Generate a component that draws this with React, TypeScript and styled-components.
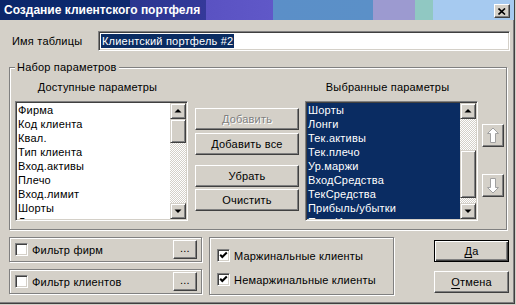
import React from 'react';
import styled, { createGlobalStyle } from 'styled-components';

const GRAY = '#d4d0c8';
const NAVY = '#0a2c62';

const AVAILABLE = [
  'Фирма',
  'Код клиента',
  'Квал.',
  'Тип клиента',
  'Вход.активы',
  'Плечо',
  'Вход.лимит',
  'Шорты',
  'Лонги',
];

const SELECTED = [
  'Шорты',
  'Лонги',
  'Тек.активы',
  'Тек.плечо',
  'Ур.маржи',
  'ВходСредства',
  'ТекСредства',
  'Прибыль/убытки',
  'ПредИммен',
];

const GlobalStyle = createGlobalStyle`
  body {
    margin: 0;
    background: ${GRAY};
    font-family: "Liberation Sans", Arial, sans-serif;
    font-size: 11px;
    letter-spacing: 0.2px;
    color: #000;
  }
`;

type ListBoxProps = {
  items: string[];
  selected?: boolean;
  thumbTop: number;
  thumbHeight: number;
};

function ScrollArrow({ down }: { down?: boolean }) {
  return (
    <svg width="14" height="14" viewBox="0 0 14 14">
      <polygon points={down ? '3.5,5.5 10.5,5.5 7,9' : '3.5,8.5 10.5,8.5 7,5'} fill="#000" />
    </svg>
  );
}

function ListBox({ items, selected, thumbTop, thumbHeight }: ListBoxProps) {
  return (
    <S_ListBox>
      <S_ListItems $selected={selected}>
        {items.map(item => (
          <S_ListItem key={item}>{item}</S_ListItem>
        ))}
      </S_ListItems>
      <S_ScrollBar>
        <S_ScrollBtn>
          <ScrollArrow />
        </S_ScrollBtn>
        <S_ScrollTrack>
          <S_Thumb $top={thumbTop} $height={thumbHeight} />
        </S_ScrollTrack>
        <S_ScrollBtn>
          <ScrollArrow down />
        </S_ScrollBtn>
      </S_ScrollBar>
    </S_ListBox>
  );
}

function MoveArrow({ down }: { down?: boolean }) {
  const pts = down
    ? '11,19 16.5,13.5 13.5,13.5 13.5,4.5 8.5,4.5 8.5,13.5 5.5,13.5'
    : '11,4 16.5,9.5 13.5,9.5 13.5,18.5 8.5,18.5 8.5,9.5 5.5,9.5';
  return (
    <svg width="20" height="21" viewBox="1 1 20 21">
      <polygon points={pts} fill="#fff" stroke="#a0a0a0" strokeWidth="1" />
    </svg>
  );
}

function CheckBox({ checked }: { checked?: boolean }) {
  return (
    <S_Check>
      {checked && (
        <svg width="9" height="9" viewBox="0 0 9 9">
          <polyline
            points="1.2,3.8 3.3,6 7.8,1.5"
            fill="none"
            stroke="#000"
            strokeWidth="2"
          />
        </svg>
      )}
    </S_Check>
  );
}

export default function App() {
  return (
    <>
      <GlobalStyle />
      <S_Window>
        <S_TitleBar>
          <S_Title>Создание клиентского портфеля</S_Title>
          <S_CloseBtn>
            <svg width="8" height="7" viewBox="0 0 8 7">
              <path d="M0.5 0.5 L7 6.5 M7 0.5 L0.5 6.5" stroke="#000" strokeWidth="1.6" />
            </svg>
          </S_CloseBtn>
        </S_TitleBar>

        <S_Body>
          <S_NameRow>
            <S_NameLabel>Имя таблицы</S_NameLabel>
            <S_Input>
              <S_Selection>Клиентский портфель #2</S_Selection>
            </S_Input>
          </S_NameRow>

          <S_Group>
            <S_Legend>Набор параметров</S_Legend>
            <S_Columns>
              <S_ListColumn>
                <S_ColumnHeader>Доступные параметры</S_ColumnHeader>
                <ListBox items={AVAILABLE} thumbTop={0} thumbHeight={24} />
              </S_ListColumn>

              <S_ButtonColumn>
                <S_Button disabled>Добавить</S_Button>
                <S_Button $gap={3}>Добавить все</S_Button>
                <S_Button $gap={10}>Убрать</S_Button>
                <S_Button $gap={2}>Очистить</S_Button>
              </S_ButtonColumn>

              <S_ListColumn>
                <S_ColumnHeader>Выбранные параметры</S_ColumnHeader>
                <ListBox items={SELECTED} selected thumbTop={31} thumbHeight={48} />
              </S_ListColumn>

              <S_ArrowColumn>
                <S_ArrowBtn>
                  <MoveArrow />
                </S_ArrowBtn>
                <S_ArrowBtn>
                  <MoveArrow down />
                </S_ArrowBtn>
              </S_ArrowColumn>
            </S_Columns>
          </S_Group>

          <S_BottomRow>
            <S_FilterColumn>
              <S_FilterBox>
                <CheckBox />
                <S_CheckLabel>Фильтр фирм</S_CheckLabel>
                <S_DotsBtn>...</S_DotsBtn>
              </S_FilterBox>
              <S_FilterBox>
                <CheckBox />
                <S_CheckLabel>Фильтр клиентов</S_CheckLabel>
                <S_DotsBtn>...</S_DotsBtn>
              </S_FilterBox>
            </S_FilterColumn>

            <S_CheckGroup>
              <S_CheckRow>
                <CheckBox checked />
                <S_CheckLabel>Маржинальные клиенты</S_CheckLabel>
              </S_CheckRow>
              <S_CheckRow>
                <CheckBox checked />
                <S_CheckLabel>Немаржинальные клиенты</S_CheckLabel>
              </S_CheckRow>
            </S_CheckGroup>

            <S_DialogButtons>
              <S_DialogBtn $default>
                <u>Д</u>а
              </S_DialogBtn>
              <S_DialogBtn>
                <u>О</u>тмена
              </S_DialogBtn>
            </S_DialogButtons>
          </S_BottomRow>
        </S_Body>
      </S_Window>
    </>
  );
}

const S_Window = styled.div`
  width: 515px;
  height: 304px;
  box-sizing: border-box;
  background: ${GRAY};
  border-right: 1px solid #404040;
  border-bottom: 1px solid #404040;
  box-shadow: inset -1px -1px 0 #808080;
  display: flex;
  flex-flow: column;
`;

const S_TitleBar = styled.div`
  height: 20px;
  flex: none;
  display: flex;
  align-items: center;
  justify-content: space-between;
  padding: 0 4px 0 4px;
  background: linear-gradient(
    to right,
    #0b266a 0px,
    #0d2a6e 130px,
    #2b3690 130px,
    #34399a 206px,
    #5a52c2 206px,
    #6058c8 273px,
    #5b8fc8 273px,
    #5b90c8 373px,
    #9c9ad0 373px,
    #9c9ad0 415px,
    #90c8c2 415px,
    #90c8c2 433px,
    #a6caf0 433px
  );
`;

const S_Title = styled.span`
  color: #fff;
  font-weight: bold;
  font-size: 12px;
  letter-spacing: 0;
`;

const S_CloseBtn = styled.div`
  width: 16px;
  height: 14px;
  box-sizing: border-box;
  background: ${GRAY};
  border: 1px solid;
  border-color: #fff #404040 #404040 #fff;
  box-shadow: inset -1px -1px 0 #808080;
  display: flex;
  align-items: center;
  justify-content: center;
  margin-top: 2px;
`;

const S_Body = styled.div`
  display: flex;
  flex-flow: column;
  padding: 11px 0 0 9px;
`;

const S_NameRow = styled.div`
  display: flex;
  align-items: center;
  height: 20px;
`;

const S_NameLabel = styled.span`
  width: 86px;
  padding-left: 3px;
`;

const S_Input = styled.div`
  width: 412px;
  height: 20px;
  box-sizing: border-box;
  background: #fff;
  border: 1px solid;
  border-color: #808080 #fff #fff #808080;
  box-shadow: inset 1px 1px 0 #404040, inset -1px -1px 0 ${GRAY};
  padding: 2px 2px;
  display: flex;
  align-items: center;
`;

const S_Selection = styled.span`
  background: ${NAVY};
  color: #fff;
  line-height: 14px;
  padding: 0 1px;
`;

const S_Group = styled.fieldset`
  margin: 10px 0 0;
  padding: 6px 0 0 5px;
  width: 498px;
  height: 169px;
  box-sizing: border-box;
  min-width: 0;
  border: 1px solid #808080;
  box-shadow: 1px 1px 0 #fff, inset 1px 1px 0 #fff;
`;

const S_Legend = styled.legend`
  padding: 0 2px;
  line-height: 13px;
  background: ${GRAY};
`;

const S_Columns = styled.div`
  display: flex;
  align-items: flex-start;
`;

const S_ListColumn = styled.div`
  display: flex;
  flex-flow: column;
  width: 173px;
`;

const S_ColumnHeader = styled.div`
  height: 14px;
  line-height: 14px;
  text-align: center;
  padding-right: 8px;
  margin-bottom: 7px;
`;

const S_ListBox = styled.div`
  height: 120px;
  box-sizing: border-box;
  display: flex;
  border: 1px solid;
  border-color: #808080 #fff #fff #808080;
  box-shadow: inset 1px 1px 0 #404040, inset -1px -1px 0 ${GRAY};
  padding: 1px;
`;

const S_ListItems = styled.div<{ $selected?: boolean }>`
  flex: 1;
  overflow: hidden;
  background: ${({ $selected }) => ($selected ? NAVY : '#fff')};
  color: ${({ $selected }) => ($selected ? '#fff' : '#000')};
`;

const S_ListItem = styled.div`
  height: 14px;
  line-height: 14px;
  padding-left: 1px;
  white-space: nowrap;
`;

const S_ScrollBar = styled.div`
  width: 16px;
  display: flex;
  flex-flow: column;
`;

const S_ScrollBtn = styled.div`
  width: 16px;
  height: 16px;
  box-sizing: border-box;
  flex: none;
  background: ${GRAY};
  border: 1px solid;
  border-color: ${GRAY} #404040 #404040 ${GRAY};
  box-shadow: inset 1px 1px 0 #fff, inset -1px -1px 0 #808080;
  display: flex;
  align-items: center;
  justify-content: center;
`;

const S_ScrollTrack = styled.div`
  flex: 1;
  background: repeating-conic-gradient(#fff 0 25%, ${GRAY} 0 50%) 0 0 / 2px 2px;
`;

const S_Thumb = styled.div<{ $top: number; $height: number }>`
  margin-top: ${({ $top }) => $top}px;
  height: ${({ $height }) => $height}px;
  box-sizing: border-box;
  background: ${GRAY};
  border: 1px solid;
  border-color: ${GRAY} #404040 #404040 ${GRAY};
  box-shadow: inset 1px 1px 0 #fff, inset -1px -1px 0 #808080;
`;

const S_ButtonColumn = styled.div`
  display: flex;
  flex-flow: column;
  width: 104px;
  margin: 28px 6px 0 7px;
`;

const S_Button = styled.div<{ disabled?: boolean; $gap?: number }>`
  height: 22px;
  box-sizing: border-box;
  margin-top: ${({ $gap }) => $gap ?? 0}px;
  display: flex;
  align-items: center;
  justify-content: center;
  background: ${GRAY};
  border: 1px solid;
  border-color: #fff #404040 #404040 #fff;
  box-shadow: inset -1px -1px 0 #808080;
  color: ${({ disabled }) => (disabled ? '#808080' : '#000')};
  text-shadow: ${({ disabled }) => (disabled ? '1px 1px 0 #fff' : 'none')};
`;

const S_ArrowColumn = styled.div`
  display: flex;
  flex-flow: column;
  gap: 27px;
  margin: 44px 0 0 4px;
`;

const S_ArrowBtn = styled.div`
  width: 22px;
  height: 23px;
  box-sizing: border-box;
  background: ${GRAY};
  border: 1px solid;
  border-color: #fff #404040 #404040 #fff;
  box-shadow: inset -1px -1px 0 #808080;
  display: flex;
  align-items: center;
  justify-content: center;
`;

const S_BottomRow = styled.div`
  display: flex;
  align-items: flex-start;
  margin-top: 7px;
`;

const S_FilterColumn = styled.div`
  display: flex;
  flex-flow: column;
  gap: 7px;
`;

const S_Etched = styled.div`
  box-sizing: border-box;
  border: 1px solid #808080;
  box-shadow: 1px 1px 0 #fff, inset 1px 1px 0 #fff;
`;

const S_FilterBox = styled(S_Etched)`
  width: 193px;
  height: 25px;
  display: flex;
  align-items: center;
  padding: 0 4px 0 5px;
`;

const S_Check = styled.div`
  width: 13px;
  height: 13px;
  flex: none;
  box-sizing: border-box;
  background: #fff;
  border: 1px solid;
  border-color: #808080 #fff #fff #808080;
  box-shadow: inset 1px 1px 0 #404040, inset -1px -1px 0 ${GRAY};
  display: flex;
  align-items: center;
  justify-content: center;
`;

const S_CheckLabel = styled.span`
  margin-left: 4px;
  flex: 1;
  white-space: nowrap;
`;

const S_DotsBtn = styled.div`
  width: 24px;
  height: 19px;
  box-sizing: border-box;
  background: ${GRAY};
  border: 1px solid;
  border-color: #fff #404040 #404040 #fff;
  box-shadow: inset -1px -1px 0 #808080;
  display: flex;
  align-items: center;
  justify-content: center;
  line-height: 1;
  padding-bottom: 3px;
`;

const S_CheckGroup = styled(S_Etched)`
  width: 185px;
  height: 58px;
  margin-left: 7px;
  display: flex;
  flex-flow: column;
  padding: 11px 0 0 7px;
  gap: 11px;
`;

const S_CheckRow = styled.div`
  display: flex;
  align-items: center;
  height: 13px;
`;

const S_DialogButtons = styled.div`
  display: flex;
  flex-flow: column;
  gap: 9px;
  margin: 3px 0 0 40px;
`;

const S_DialogBtn = styled.div<{ $default?: boolean }>`
  width: 75px;
  height: 22px;
  box-sizing: border-box;
  display: flex;
  align-items: center;
  justify-content: center;
  background: ${GRAY};
  border: 1px solid;
  border-color: ${({ $default }) => ($default ? '#000' : '#fff #404040 #404040 #fff')};
  box-shadow: ${({ $default }) =>
    $default
      ? 'inset 1px 1px 0 #fff, inset -1px -1px 0 #404040, inset -2px -2px 0 #808080'
      : 'inset -1px -1px 0 #808080'};
  u {
    text-decoration-thickness: 1px;
    text-underline-offset: 2px;
  }
`;
